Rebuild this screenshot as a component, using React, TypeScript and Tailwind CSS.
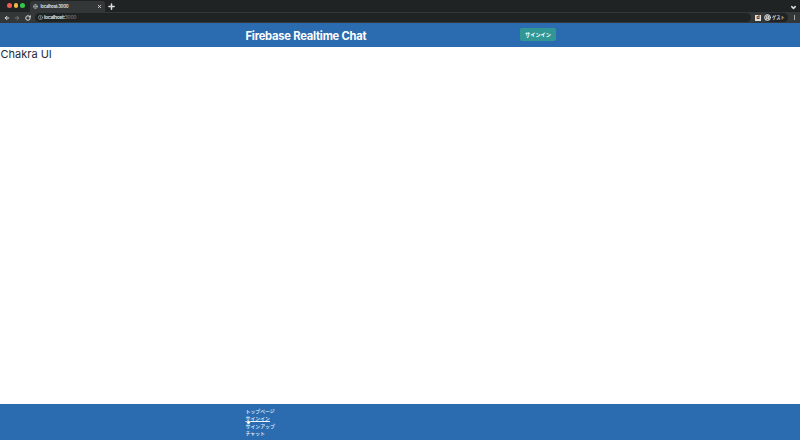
import { ArrowLeft, ArrowRight, RotateCw, Globe, Info, X, Plus, ChevronDown, CircleUserRound } from "lucide-react";

const links = ["トップページ", "サインイン", "サインアップ", "チャット"];

function BrowserChrome() {
  return (
    <div className="h-[23px] shrink-0 bg-[#202323] text-[#dedede]">
      <div className="flex h-3 items-end pl-[7px] pr-[3px]">
        <div className="flex h-[11px] w-[23px] items-center gap-[2px] self-start">
          <span className="size-[4.5px] rounded-full bg-[#f45b52]" />
          <span className="size-[4.5px] rounded-full bg-[#f4b942]" />
          <span className="size-[4.5px] rounded-full bg-[#34c84a]" />
        </div>
        <div className="flex h-[11px] w-[75px] items-center rounded-t-[3px] bg-[#343737] pl-[3px] pr-[3px]">
          <Globe className="size-[5px] text-[#aaaaaa]" strokeWidth={3} />
          <span className="ml-[2.5px] flex-1 pt-[2px] text-[4.2px] font-bold leading-none tracking-[-0.26px]">localhost:3000</span>
          <X className="size-[5px]" strokeWidth={4} />
        </div>
        <Plus className="mb-[1px] ml-[2px] size-[9px]" strokeWidth={4} />
        <ChevronDown className="mb-[1px] ml-auto size-[7px]" strokeWidth={5} />
      </div>
      <div className="flex h-[11px] items-center bg-[#343737] pl-[4px] pr-[5px]">
        <ArrowLeft className="size-[6px]" strokeWidth={4} />
        <ArrowRight className="ml-[4px] size-[6px] text-[#858888]" strokeWidth={3} />
        <RotateCw className="ml-[5px] size-[6px]" strokeWidth={4} />
        <div className="ml-[4px] flex h-[9px] w-[716px] items-center rounded-full bg-[#202323] pl-[3px]">
          <Info className="size-[5px] text-[#a8aaaa]" strokeWidth={3} />
          <span className="ml-[1px] text-[5px] leading-none tracking-[-0.29px] text-[#f0f0f0]"><span className="font-semibold">localhost:</span><span className="text-[#888b8b]">3000</span></span>
        </div>
        <span className="ml-[4px] flex size-[6px] items-center justify-center bg-[#dedede] text-[5px] font-bold leading-none text-[#202323]">d</span>
        <div className="ml-[3px] flex h-[9px] w-[24px] items-center rounded-full bg-[#202323]">
          <CircleUserRound className="size-[7px] shrink-0 rounded-full bg-[#606464]" strokeWidth={3} />
          <span className="ml-[1px] whitespace-nowrap pt-[1px] text-[4.2px] font-bold leading-none">ゲスト</span>
        </div>
        <span className="ml-auto h-[5px] w-px bg-[#a8aaaa]" />
      </div>
    </div>
  );
}

export default function App() {
  return (
    <div className="flex h-[440px] w-[800px] flex-col overflow-hidden bg-white font-['Inter','Noto_Sans_CJK_JP',sans-serif]">
      <BrowserChrome />
      <header className="flex h-6 shrink-0 items-center justify-between bg-[#2b6cb0] pl-[245.5px] pr-[244px] text-white">
        <h1 className="mt-[3px] whitespace-nowrap text-[11.2px] font-bold leading-none tracking-[-0.23px]">Firebase Realtime Chat</h1>
        <button className="mb-[1px] flex h-[13px] w-[36px] items-center justify-center rounded-[2px] bg-[#319795] pt-[1.5px] text-[5.2px] font-bold leading-none">サインイン</button>
      </header>
      <main className="flex-1 pt-[2px]">
        <p className="pl-[0.5px] text-[11px] leading-[11px] text-[#242b38]">Chakra UI</p>
      </main>
      <footer className="h-[36px] shrink-0 bg-[#2b6cb0] pl-[245.5px] pt-[3.8px] text-[4.9px] font-medium leading-[7.5px] text-[#edf4fb]">
        <ul>
          {links.map((link, index) => (
            <li key={link} className="relative h-[7.5px]">
              <a className={index === 1 ? "underline decoration-[0.6px] underline-offset-[1px]" : ""}>{link}</a>
              {index === 1 && (
                <svg viewBox="0 0 6 7" className="absolute left-0 top-[4px] h-[6px] w-[5px]">
                  <path d="M2 6 0 3l1-.5 1 .7V0h1v2l2 .5v2L4 6Z" fill="white" stroke="#344b65" strokeWidth=".3" />
                </svg>
              )}
            </li>
          ))}
        </ul>
      </footer>
    </div>
  );
}
